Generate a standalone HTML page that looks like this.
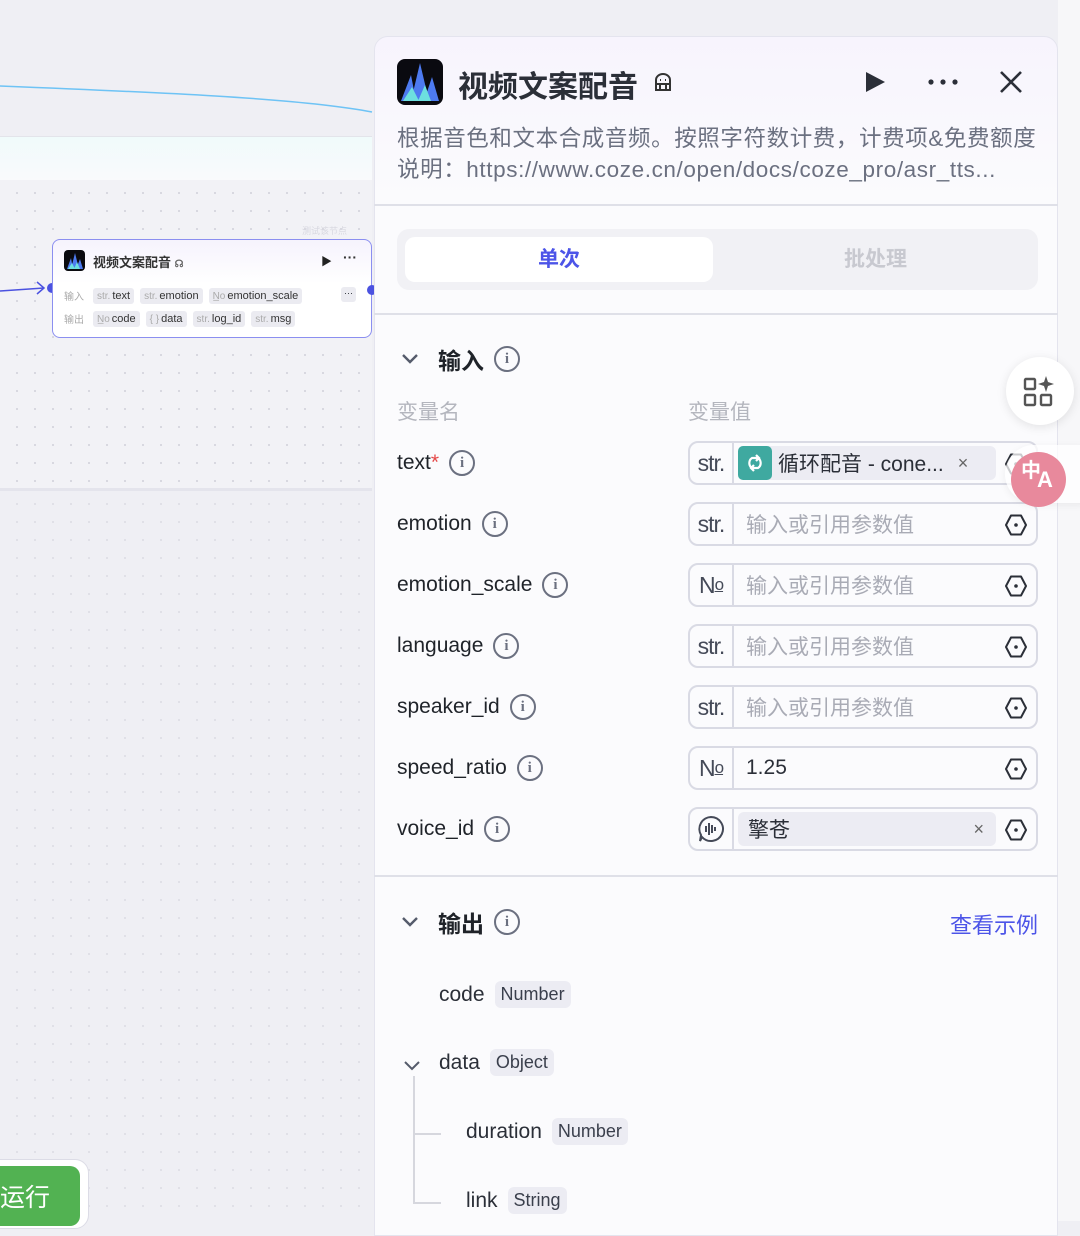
<!DOCTYPE html>
<html><head><meta charset="utf-8"><style>
*{box-sizing:border-box;margin:0;padding:0}
body{width:1080px;height:1221px;overflow:hidden;background:#efeff4;font-family:"Liberation Sans","Noto Sans CJK SC",sans-serif;position:relative;color:#1f2329}
.abs{position:absolute}
.dots{background-image:radial-gradient(#d6d6de 1px,transparent 1.2px);background-size:18px 18px;background-position:8px 4px}
.tag{display:inline-block;background:#ebebf1;border-radius:3px;padding:2px 4px;margin-right:6px;font-size:11px;color:#333}
.tag i{font-style:normal;color:#aaa;font-size:10px;margin-right:2px}
.panel{left:374px;top:36px;width:684px;height:1200px;background:#fbfbfd;border:1px solid #e4e4ee;border-radius:14px 14px 0 0}
.sep{left:374px;width:684px;height:2px;background:#dfe0e8}
.lbl{left:397px;font-size:21px;color:#1f2329;display:flex;align-items:center;height:30px}
.info{display:inline-block;width:26px;height:26px;border:2px solid #6b7080;border-radius:50%;margin-left:10px;text-align:center;font-size:15px;line-height:22px;color:#6b7080;font-family:"Liberation Serif",serif;font-weight:bold}
.box{left:688px;width:350px;height:44px;border:2px solid #d9dae4;border-radius:10px;background:#fbfbfd;display:flex;align-items:center}
.box .t{width:44px;height:100%;border-right:2px solid #d9dae4;display:flex;align-items:center;justify-content:center;font-size:23px;color:#454a58;letter-spacing:-1px}
.box .p{flex:1;padding-left:12px;font-size:21px;color:#a9abb5}
.hex{position:absolute;right:8px;top:9px;width:24px;height:24px}
.ty{display:inline-block;background:#ececf3;border-radius:6px;padding:3px 6px;font-size:18px;color:#3a3f4c;margin-left:10px}
.on{font-size:21px;color:#2b2f38;display:flex;align-items:center;position:absolute}
.no u{font-size:17px}
</style></head><body>
<div class="abs" style="left:1058px;top:0;width:22px;height:1221px;background:#f7f7f9"></div>
<svg class="abs" style="left:0;top:0" width="380" height="130"><path d="M0 86 C150 92 300 98 372 112" stroke="#6ec3f5" stroke-width="1.5" fill="none"/></svg>
<div class="abs" style="left:0;top:136px;width:372px;height:44px;background:linear-gradient(#f0fbfb,#f9fafc);border-top:1px solid #e3e4ea"></div>
<div class="abs dots" style="left:0;top:180px;width:372px;height:308px;background-color:#f2f2f6"></div>
<div class="abs" style="left:0;top:488px;width:372px;height:3px;background:#e4e4ec"></div>
<div class="abs dots" style="left:0;top:491px;width:372px;height:730px;background-color:#efeff4;opacity:.6"></div>
<div class="abs" style="left:302px;top:224px;font-size:9px;color:#d8d8e0">测试该节点</div>
<svg class="abs" style="left:0;top:278px" width="56" height="20"><path d="M0 13 L44 10" stroke="#4b52e0" stroke-width="1.5" fill="none"/><path d="M37 4 L44 10 L37 16" stroke="#4b52e0" stroke-width="1.5" fill="none"/><circle cx="52" cy="10" r="5" fill="#4b52e0"/></svg>
<div class="abs" style="left:52px;top:239px;width:320px;height:99px;background:linear-gradient(#f6f3fd,#fff 45%);border:1.5px solid #8b8ff0;border-radius:8px">
 <div class="abs" style="left:11px;top:10px;width:21px;height:21px;background:#0a0a0f;border-radius:4px;overflow:hidden"><svg width="21" height="21"><path d="M3 19 L7 8 L9 19Z M7 19 L11 3 L15 19Z M12 19 L16 9 L19 19Z" fill="#4d7af0"/><path d="M4 19 L8 13 L11 19Z M10 19 L13 12 L16 19Z" fill="#6de0e0"/></svg></div>
 <div class="abs" style="left:40px;top:12px;font-size:13px;font-weight:bold;color:#333">视频文案配音 <span style="font-size:10px;color:#666">☊</span></div>
 <div class="abs" style="left:268px;top:13px;font-size:11px;color:#222">▶</div>
 <div class="abs" style="left:290px;top:9px;font-size:14px;color:#333;font-weight:bold">···</div>
 <div class="abs" style="left:11px;top:48px;font-size:10px;color:#aaa">输入</div>
 <div class="abs" style="left:40px;top:46px;white-space:nowrap;width:245px;overflow:hidden"><span class="tag"><i>str.</i>text</span><span class="tag"><i>str.</i>emotion</span><span class="tag"><i>N̲o</i>emotion_scale</span></div>
 <div class="abs" style="left:288px;top:47px;width:15px;height:15px;background:#ebebf1;border-radius:3px;font-size:9px;text-align:center;line-height:12px">···</div>
 <div class="abs" style="left:314px;top:45px;width:10px;height:10px;border-radius:50%;background:#4b52e0"></div>
 <div class="abs" style="left:11px;top:71px;font-size:10px;color:#aaa">输出</div>
 <div class="abs" style="left:40px;top:69px;white-space:nowrap"><span class="tag"><i>N̲o</i>code</span><span class="tag"><i>{ }</i>data</span><span class="tag"><i>str.</i>log_id</span><span class="tag"><i>str.</i>msg</span></div>
</div>
<div class="abs" style="left:-30px;top:1159px;width:119px;height:70px;background:#fff;border:1px solid #dcdce6;border-radius:14px"></div>
<div class="abs" style="left:-20px;top:1166px;width:100px;height:60px;background:#52b252;border-radius:10px;color:#fff;font-size:25px;padding:12px 0 0 20px">运行</div>
<svg class="abs" style="left:925px;top:-12px" width="80" height="20"><circle cx="20" cy="0" r="10" stroke="#333" stroke-width="2" fill="none"/><rect x="70" y="0" width="4" height="5" fill="#333"/></svg>

<div class="abs panel" style="background:linear-gradient(#f7f4fd,#fbfbfd 160px)"></div>
<div class="abs" style="left:397px;top:59px;width:46px;height:46px;background:#0a0a10;border-radius:8px;overflow:hidden"><svg width="46" height="46"><path d="M4 42 L14 16 L19 42Z M14 42 L23 4 L32 42Z M27 42 L35 18 L42 42Z" fill="#4d7af0"/><path d="M6 42 L15 28 L22 42Z M21 42 L28 26 L34 42Z" fill="#6de0df"/></svg></div>
<div class="abs" style="left:458px;top:62px;font-size:30px;font-weight:bold;color:#2b2f38">视频文案配音</div>
<svg class="abs" style="left:652px;top:72px" width="22" height="22"><path d="M4 12 V8 a7 6 0 0 1 14 0 V12 H4 M4 12 V18 H18 V12 M8 12 v6 M14 12 v6 M8 8 h1 M13 8 h1" stroke="#333" stroke-width="2" fill="none"/></svg>
<svg class="abs" style="left:863px;top:70px" width="24" height="24"><path d="M3 2 L22 12 L3 22Z" fill="#2b2f38"/></svg>
<svg class="abs" style="left:926px;top:77px" width="34" height="10"><circle cx="5" cy="5" r="2.6" fill="#2b2f38"/><circle cx="17" cy="5" r="2.6" fill="#2b2f38"/><circle cx="29" cy="5" r="2.6" fill="#2b2f38"/></svg>
<svg class="abs" style="left:998px;top:69px" width="26" height="26"><path d="M3 3 L23 23 M23 3 L3 23" stroke="#2b2f38" stroke-width="2.6"/></svg>
<div class="abs" style="left:397px;top:123px;width:650px;font-size:22.5px;letter-spacing:0.6px;line-height:31px;color:#6b7080;white-space:nowrap">根据音色和文本合成音频。按照字符数计费，计费项&amp;免费额度<br>说明：https://www.coze.cn/open/docs/coze_pro/asr_tts...</div>
<div class="abs sep" style="top:204px"></div>
<div class="abs" style="left:397px;top:229px;width:641px;height:61px;background:#f1f1f5;border-radius:12px"></div>
<div class="abs" style="left:405px;top:237px;width:308px;height:45px;background:#fff;border-radius:10px;text-align:center;line-height:45px;font-size:21px;font-weight:bold;color:#4c54e8">单次</div>
<div class="abs" style="left:713px;top:237px;width:325px;height:45px;text-align:center;line-height:45px;font-size:21px;font-weight:bold;color:#c8c9d0">批处理</div>
<div class="abs sep" style="top:313px"></div>

<svg class="abs" style="left:400px;top:351px" width="20" height="16"><path d="M3 4 L10 11 L17 4" stroke="#555b6b" stroke-width="2.4" fill="none"/></svg>
<div class="abs lbl" style="left:438px;top:344px;font-weight:bold;font-size:23px">输入<span class="info">i</span></div>
<div class="abs" style="left:397px;top:396px;font-size:21px;color:#b4b6be">变量名</div>
<div class="abs" style="left:688px;top:396px;font-size:21px;color:#b4b6be">变量值</div>

<div class="abs lbl" style="top:448px">text<span style="color:#e54848">*</span><span class="info">i</span></div>
<div class="abs lbl" style="top:509px">emotion<span class="info">i</span></div>
<div class="abs lbl" style="top:570px">emotion_scale<span class="info">i</span></div>
<div class="abs lbl" style="top:631px">language<span class="info">i</span></div>
<div class="abs lbl" style="top:692px">speaker_id<span class="info">i</span></div>
<div class="abs lbl" style="top:753px">speed_ratio<span class="info">i</span></div>
<div class="abs lbl" style="top:814px">voice_id<span class="info">i</span></div>

<div class="abs box" style="top:441px"><div class="t">str.</div><div style="margin-left:4px;width:258px;height:34px;background:#ececf3;border-radius:6px;display:flex;align-items:center;font-size:21px;color:#2b2f38;white-space:nowrap"><span style="width:34px;height:34px;background:#3fa9a0;border-radius:5px;margin-right:6px;display:inline-flex;align-items:center;justify-content:center"><svg width="22" height="22"><path d="M8 16 A6 6 0 0 1 8 6 H14 M12 3 L15 6 L12 9 M14 6 A6 6 0 0 1 14 16 H8 M10 19 L7 16 L10 13" stroke="#fff" stroke-width="2.2" fill="none"/></svg></span>循环配音 - cone...<span style="margin-left:14px;font-size:18px;color:#666">×</span></div><svg class="hex" viewBox="0 0 24 24"><path d="M7 2.5 H17 L22 12 L17 21.5 H7 L2 12Z" stroke="#2b2f38" stroke-width="2" fill="none" stroke-linejoin="round"/><circle cx="12" cy="12" r="1.8" fill="#2b2f38"/></svg></div>
<div class="abs box" style="top:502px"><div class="t">str.</div><div class="p">输入或引用参数值</div><svg class="hex" viewBox="0 0 24 24"><path d="M7 2.5 H17 L22 12 L17 21.5 H7 L2 12Z" stroke="#2b2f38" stroke-width="2" fill="none" stroke-linejoin="round"/><circle cx="12" cy="12" r="1.8" fill="#2b2f38"/></svg></div>
<div class="abs box" style="top:563px"><div class="t no">N<u>o</u></div><div class="p">输入或引用参数值</div><svg class="hex" viewBox="0 0 24 24"><path d="M7 2.5 H17 L22 12 L17 21.5 H7 L2 12Z" stroke="#2b2f38" stroke-width="2" fill="none" stroke-linejoin="round"/><circle cx="12" cy="12" r="1.8" fill="#2b2f38"/></svg></div>
<div class="abs box" style="top:624px"><div class="t">str.</div><div class="p">输入或引用参数值</div><svg class="hex" viewBox="0 0 24 24"><path d="M7 2.5 H17 L22 12 L17 21.5 H7 L2 12Z" stroke="#2b2f38" stroke-width="2" fill="none" stroke-linejoin="round"/><circle cx="12" cy="12" r="1.8" fill="#2b2f38"/></svg></div>
<div class="abs box" style="top:685px"><div class="t">str.</div><div class="p">输入或引用参数值</div><svg class="hex" viewBox="0 0 24 24"><path d="M7 2.5 H17 L22 12 L17 21.5 H7 L2 12Z" stroke="#2b2f38" stroke-width="2" fill="none" stroke-linejoin="round"/><circle cx="12" cy="12" r="1.8" fill="#2b2f38"/></svg></div>
<div class="abs box" style="top:746px"><div class="t no">N<u>o</u></div><div class="p" style="color:#2b2f38">1.25</div><svg class="hex" viewBox="0 0 24 24"><path d="M7 2.5 H17 L22 12 L17 21.5 H7 L2 12Z" stroke="#2b2f38" stroke-width="2" fill="none" stroke-linejoin="round"/><circle cx="12" cy="12" r="1.8" fill="#2b2f38"/></svg></div>
<div class="abs box" style="top:807px"><div class="t"><svg width="28" height="28"><path d="M14 2 A12 12 0 1 1 5 22 L3 26 L4 20 A12 12 0 0 1 14 2Z" stroke="#454a58" stroke-width="2" fill="none"/><path d="M9 11v6 M12 8v12 M15 10v8 M18 12v4" stroke="#454a58" stroke-width="2"/></svg></div><div style="margin-left:4px;width:258px;height:34px;background:#ececf3;border-radius:6px;display:flex;align-items:center;font-size:21px;color:#2b2f38;padding-left:10px">擎苍<span style="margin-left:auto;margin-right:12px;font-size:18px;color:#666">×</span></div><svg class="hex" viewBox="0 0 24 24"><path d="M7 2.5 H17 L22 12 L17 21.5 H7 L2 12Z" stroke="#2b2f38" stroke-width="2" fill="none" stroke-linejoin="round"/><circle cx="12" cy="12" r="1.8" fill="#2b2f38"/></svg></div>

<div class="abs" style="left:1006px;top:357px;width:68px;height:68px;border-radius:50%;background:#fff;box-shadow:0 2px 10px rgba(0,0,0,.1)"></div>
<svg class="abs" style="left:1022px;top:374px" width="34" height="34"><rect x="3" y="5" width="10" height="10" rx="1" stroke="#555" stroke-width="2.4" fill="none"/><rect x="3" y="21" width="10" height="10" rx="1" stroke="#555" stroke-width="2.4" fill="none"/><rect x="19" y="21" width="10" height="10" rx="1" stroke="#555" stroke-width="2.4" fill="none"/><path d="M24 2 L26 8 L32 10 L26 12 L24 18 L22 12 L16 10 L22 8Z" fill="#555"/></svg>
<div class="abs" style="left:1005px;top:445px;width:80px;height:58px;background:rgba(255,255,255,.75);border-radius:29px 0 0 29px;box-shadow:0 2px 8px rgba(0,0,0,.06)"></div>
<div class="abs" style="left:1011px;top:452px;width:55px;height:55px;border-radius:50%;background:#e8899c;color:#fff;font-weight:bold;font-size:20px;line-height:20px;padding:8px 0 0 10px">中<span style="font-size:22px;position:relative;top:10px;left:-4px">A</span></div>

<div class="abs sep" style="top:875px"></div>
<svg class="abs" style="left:400px;top:914px" width="20" height="16"><path d="M3 4 L10 11 L17 4" stroke="#555b6b" stroke-width="2.4" fill="none"/></svg>
<div class="abs lbl" style="left:438px;top:907px;font-weight:bold;font-size:23px">输出<span class="info">i</span></div>
<div class="abs" style="left:950px;top:908px;font-size:22px;color:#4c54e8">查看示例</div>

<div class="on" style="left:439px;top:981px">code<span class="ty">Number</span></div>
<svg class="abs" style="left:402px;top:1058px" width="20" height="16"><path d="M3 4 L10 11 L17 4" stroke="#555b6b" stroke-width="2" fill="none"/></svg>
<div class="on" style="left:439px;top:1049px">data<span class="ty">Object</span></div>
<div class="abs" style="left:413px;top:1076px;width:2px;height:127px;background:#d6d7de"></div>
<div class="abs" style="left:413px;top:1133px;width:28px;height:2px;background:#d6d7de"></div>
<div class="abs" style="left:413px;top:1202px;width:28px;height:2px;background:#d6d7de"></div>
<div class="on" style="left:466px;top:1118px">duration<span class="ty">Number</span></div>
<div class="on" style="left:466px;top:1187px">link<span class="ty">String</span></div>
</body></html>
